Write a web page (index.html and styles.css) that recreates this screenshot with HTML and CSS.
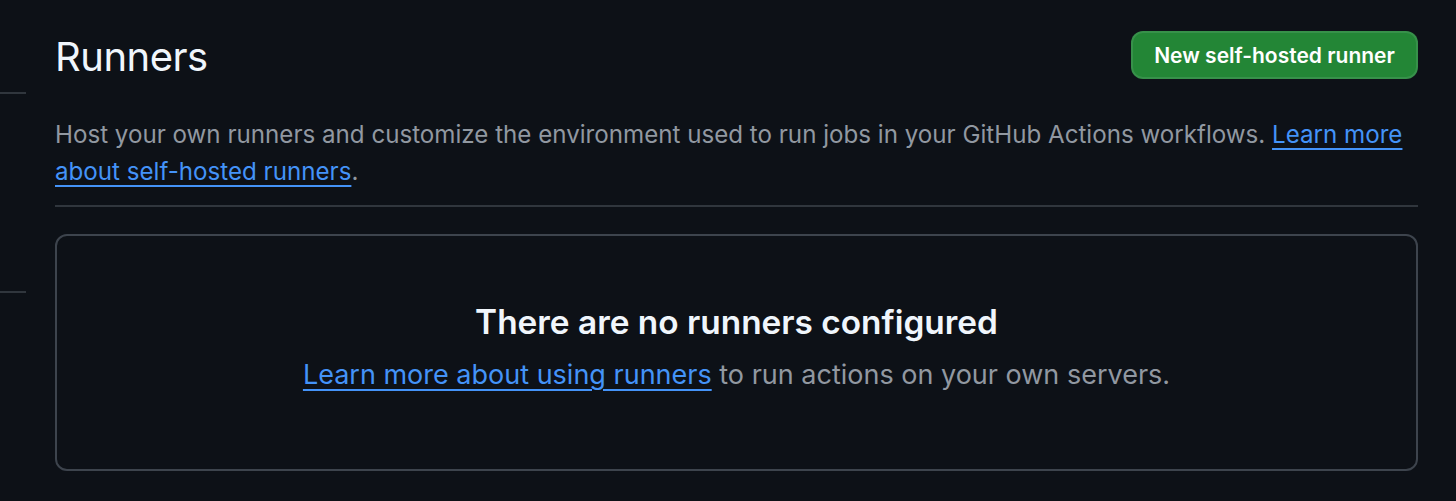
FILE: index.html
```html
<!DOCTYPE html>
<html>
<head>
<meta charset="utf-8">
<link rel="stylesheet" href="styles.css">
</head>
<body>
<div class="page">
  <aside class="sidebar">
    <div class="side-line first"></div>
    <div class="side-line second"></div>
  </aside>
  <main class="main">
    <div class="header">
      <h1 class="title">Runners</h1>
      <button class="btn-primary">New self-hosted runner</button>
    </div>
    <p class="desc">Host your own runners and customize the environment used to run jobs in your GitHub Actions workflows. <a class="link" href="#">Learn more about self-hosted runners</a>.</p>
    <div class="divider"></div>
    <div class="blank">
      <h2 class="blank-title">There are no runners configured</h2>
      <p class="blank-text"><a class="link" href="#">Learn more about using runners</a> to run actions on your own servers.</p>
    </div>
  </main>
</div>
</body>
</html>
```
FILE: styles.css
```css
html, body {
  margin: 0;
  padding: 0;
  background: #0d1117;
}
body {
  font-family: Inter, "Noto Sans", "Liberation Sans", sans-serif;
  color: #e6edf3;
  width: 1456px;
  height: 501px;
  overflow: hidden;
}
.page {
  display: flex;
}
.sidebar {
  width: 26px;
  flex: none;
  display: flex;
  flex-direction: column;
}
.side-line {
  height: 2px;
  background: #30363d;
}
.side-line.first {
  margin-top: 92px;
}
.side-line.second {
  margin-top: 197px;
}
.main {
  margin-left: 29px;
  width: 1363px;
  padding-top: 31px;
}
.header {
  display: flex;
  justify-content: space-between;
  align-items: flex-start;
}
.title {
  margin: 0;
  font-size: 40px;
  font-weight: 400;
  line-height: 52px;
  letter-spacing: -0.5px;
  color: #f0f6fc;
}
.btn-primary {
  height: 48px;
  width: 287px;
  border: 2px solid rgba(240, 246, 252, 0.1);
  border-radius: 12px;
  background: #238636;
  color: #ffffff;
  font-family: Inter, "Noto Sans", "Liberation Sans", sans-serif;
  font-weight: 600;
  font-size: 21px;
  padding: 0;
}
.desc {
  margin: 33px 0 0 0;
  font-size: 24.15px;
  line-height: 37px;
  color: #9198a1;
}
.link {
  color: #4493f8;
  text-decoration: underline;
  text-decoration-thickness: 2px;
  text-underline-offset: 5px;
}
.divider {
  height: 2px;
  background: #30363d;
  margin-top: 15px;
}
.blank {
  margin-top: 27px;
  height: 237px;
  border: 2px solid #3d444d;
  border-radius: 12px;
  box-sizing: border-box;
  display: flex;
  flex-direction: column;
  align-items: center;
  padding-top: 64px;
}
.blank-title {
  margin: 0;
  font-size: 33.4px;
  font-weight: 600;
  line-height: 44px;
  color: #f0f6fc;
}
.blank-text {
  margin: 11px 0 0 0;
  font-size: 27px;
  line-height: 40px;
  color: #9198a1;
}
```
